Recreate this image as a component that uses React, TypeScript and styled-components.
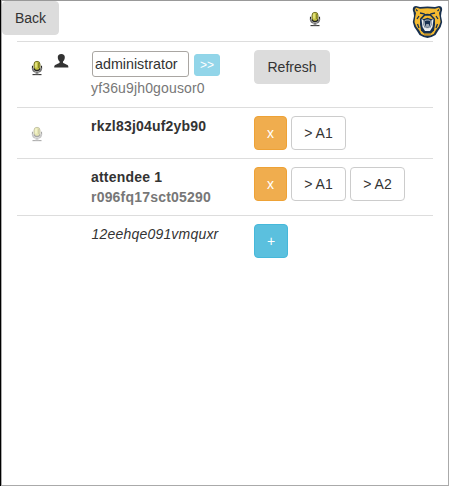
import React from "react";
import styled, { createGlobalStyle, css } from "styled-components";

const GlobalStyle = createGlobalStyle`
  * { box-sizing: border-box; }
  html, body { margin: 0; background: #fff; overflow: hidden; }
  body { font: 14px/20px "Liberation Sans", Arial, sans-serif; color: #333; }
`;

const Frame = styled.main`
  height: 486px;
  border-left: 1px solid #000;
`;

const Panel = styled.div`
  height: 486px;
  border: 1px solid #aaa;
  border-top-color: #999;
`;

const Header = styled.header`
  display: flex;
  align-items: flex-start;
  height: 40px;
`;

type Kind = "default" | "warning" | "info" | "plain";

const kinds = {
  default: css`background: #dcdcdc; border-color: #dcdcdc; color: #333;`,
  warning: css`background: #f0ad4e; border-color: #eea236; color: #fff;`,
  info: css`background: #5bc0de; border-color: #46b8da; color: #fff;`,
  plain: css`background: #fff; border-color: #ccc; color: #333;`,
};

const Button = styled.button<{ $kind: Kind; $width: number }>`
  flex: none;
  width: ${(p) => p.$width}px;
  height: 34px;
  padding: 0;
  border: 1px solid;
  border-radius: 4px;
  font: inherit;
  ${(p) => kinds[p.$kind]}
`;

const SmallButton = styled.button`
  width: 26px;
  height: 22px;
  margin: 3px 0 0 5px;
  padding: 0;
  border: 1px solid #90d5e8;
  border-radius: 3px;
  background: #92d5e9;
  color: #fff;
  font: 12px/18px "Liberation Sans", Arial, sans-serif;
`;

const HeaderMic = styled.div`
  margin: 10px 0 0 250px;
  line-height: 0;
`;

const Logo = styled.div`
  margin: 4px 0 0 91px;
  line-height: 0;
`;

const List = styled.section`
  margin: 0 15px;
`;

const Row = styled.div<{ $height: number }>`
  display: grid;
  grid-template-columns: 66px 163px 1fr;
  height: ${(p) => p.$height}px;
  padding: 8px 0 0 8px;
  border-top: 1px solid #ddd;
`;

const Status = styled.div`
  display: flex;
  align-items: flex-start;
  gap: 10px;
  padding: 0 0 0 6px;
`;

const MicSlot = styled.span<{ $top: number; $muted?: boolean }>`
  margin-top: ${(p) => p.$top}px;
  line-height: 0;
  opacity: ${(p) => (p.$muted ? 0.4 : 1)};
`;

const UserSlot = styled.span`
  margin: 4px 0 0 1px;
  line-height: 0;
`;

const Identity = styled.div<{ $bold?: boolean; $italic?: boolean }>`
  font-weight: ${(p) => (p.$bold ? 700 : 400)};
  font-style: ${(p) => (p.$italic ? "italic" : "normal")};
  letter-spacing: ${(p) => (p.$bold || p.$italic ? 0.2 : 0.15)}px;
  padding-left: ${(p) => (p.$italic ? 0.5 : 0)}px;
`;

const Edit = styled.div`
  display: flex;
  align-items: flex-start;
  height: 28px;
  padding: 1px 0 0 1px;
`;

const NameInput = styled.input`
  width: 97px;
  height: 26px;
  padding: 0 2px;
  border: 1px solid #a9a6a2;
  border-radius: 3px;
  background: #fff;
  color: #333;
  font: inherit;
  font-size: 14.3px;
`;

const Code = styled.div`
  color: #777;
`;

const Actions = styled.div`
  display: flex;
  gap: 4px;
  align-items: flex-start;
`;

const MicIcon = () => (
  <svg width="12" height="16" viewBox="0 0 12 16">
    <rect x="3" y="1.3" width="6" height="9" rx="3" fill="#c3c243" stroke="#66651f" strokeWidth="0.9" />
    <path d="M5 2.6v5" stroke="#e9e98d" strokeWidth="1.5" />
    <path d="M7.6 3v5" stroke="#858326" />
    <path d="M1.5 5.8v2.4M10.5 5.8v2.4" stroke="#222" strokeWidth="1.1" />
    <path d="M1.5 7.8c.1 3 1.7 4.4 4.5 4.4s4.4-1.4 4.500-4.4" fill="none" stroke="#777" strokeWidth="1.6" />
    <path d="M3 8.5c.3 1.6 1.2 2.200 3 2.200s2.700-.6 3-2.200" fill="none" stroke="#222" strokeWidth="1.2" />
    <path d="M6 11v3" stroke="#555" strokeWidth="2.2" />
    <path d="M4.5 11.8h3" stroke="#ddd" strokeWidth="0.8" />
    <path d="M1.500 14.6h9" stroke="#333" strokeWidth="1.1" />
    <path d="M4 13.7h4" stroke="#bbb" strokeWidth="0.8" />
  </svg>
);

const UserIcon = () => (
  <svg width="15" height="14" viewBox="0 0 15 14">
    <path d="M7.3 0C5 0 3.6 1.5 3.8 3.5c.1 1.8.7 3.1 1.8 4.1v1.1c-.5.8-3.2 1.4-4.5 2.3C.4 11.5.2 12.5.2 13.5h14.2c0-1-.2-2-.9-2.5-1.3-.9-4-1.5-4.5-2.3V7.6c1.1-1 1.7-2.3 1.8-4.1C11 1.5 9.6 0 7.3 0Z" fill="#333" />
  </svg>
);

const BearLogo = () => (
  <svg width="31" height="34" viewBox="0 0 31 34">
    <path d="M4 1C1 1 0 4 1.5 7l.5 4-1.2 6 1.5 5 2.7 4 2.5 4 4 2 4 1 4-1 4-2 2.500-4 2.700-4 1.500-5-1.200-6 .5-4C31 4 30 1 27 1l-4 1-7.500-.5L8 2Z" fill="#17304f" />
    <path d="M4 2.5 2.6 5l1.400 3-.8 4-.7 5 1.700 4.500 2.800 3.500 2.200 4 3.500 1.500h5.600l3.500-1.500 2.200-4 2.800-3.500 1.700-4.500-.7-5-.8-4 1.400-3L27 2.500l-4 1.300-7.500-.6L8 3.800Z" fill="#f5bb31" />
    <path d="M4 4.500 5.500 6M27 4.500 25.500 6" stroke="#17304f" strokeWidth="1.2" />
    <path d="m8 8 4 .8 1.500 1.700M23 8l-4 .8-1.500 1.700M5 14l2-3M26 14l-2-3M5.500 19 7 23M25.500 19 24 23" fill="none" stroke="#17304f" strokeWidth="1.3" />
    <path d="M12 9.500c2-1 5-1 7 0l4 4v6l-1 6-3 3h-7l-3-3-1-6v-6Z" fill="#17304f" />
    <path d="M13 10.700h5l3 3-2 .3-3.500-1.200L12 14l-2-.3Z" fill="#f5bb31" />
    <path d="m9.500 14 1 8 2.500 4h5l2.500-4 1-8-2 1v5l-1.500 3h-5L11.500 20v-5Z" fill="#edf0f1" />
    <path d="M12 16.500c1-2 6-2 7 0l-.5 4-1.500 2.500h-3l-1.500-2.500Z" fill="#17304f" stroke="#cbd0d6" strokeWidth="1" />
    <path d="m13.500 21 .8-2h2.400l.8 2-1 1h-2Z" fill="#9aa6b4" />
    <path d="M12 29.700h7" stroke="#c08c24" />
  </svg>
);

export default function App() {
  return (
    <Frame>
      <GlobalStyle />
      <Panel>
        <Header>
          <Button $kind="default" $width={57}>Back</Button>
          <HeaderMic><MicIcon /></HeaderMic>
          <Logo><BearLogo /></Logo>
        </Header>
        <List>
          <Row $height={66}>
            <Status>
              <MicSlot $top={10}><MicIcon /></MicSlot>
              <UserSlot><UserIcon /></UserSlot>
            </Status>
            <Identity>
              <Edit>
                <NameInput defaultValue="administrator" aria-label="Name" />
                <SmallButton>&gt;&gt;</SmallButton>
              </Edit>
              <Code>yf36u9jh0gousor0</Code>
            </Identity>
            <Actions><Button $kind="default" $width={76}>Refresh</Button></Actions>
          </Row>
          <Row $height={51}>
            <Status><MicSlot $top={10} $muted><MicIcon /></MicSlot></Status>
            <Identity $bold>rkzl83j04uf2yb90</Identity>
            <Actions>
              <Button $kind="warning" $width={33}>x</Button>
              <Button $kind="plain" $width={55}>&gt; A1</Button>
            </Actions>
          </Row>
          <Row $height={57}>
            <Status />
            <Identity $bold>
              attendee 1
              <Code>r096fq17sct05290</Code>
            </Identity>
            <Actions>
              <Button $kind="warning" $width={33}>x</Button>
              <Button $kind="plain" $width={55}>&gt; A1</Button>
              <Button $kind="plain" $width={55}>&gt; A2</Button>
            </Actions>
          </Row>
          <Row $height={51}>
            <Status />
            <Identity $italic>12eehqe091vmquxr</Identity>
            <Actions><Button $kind="info" $width={34}>+</Button></Actions>
          </Row>
        </List>
      </Panel>
    </Frame>
  );
}
